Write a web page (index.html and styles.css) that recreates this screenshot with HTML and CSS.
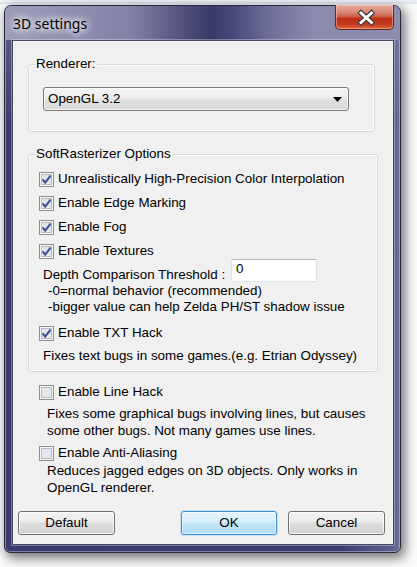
FILE: index.html
```html
<!DOCTYPE html>
<html>
<head>
<meta charset="utf-8">
<link rel="stylesheet" href="styles.css">
</head>
<body>
<div class="desk-strip"></div>
<div class="window">
  <div class="titlebar">
    <span class="title">3D settings</span>
    <div class="close">
      <svg width="59" height="25" viewBox="0 0 59 25">
        <path d="M25 8 L35.5 17.5 M35.5 8 L25 17.5" stroke="#3a3a3a" stroke-width="5.2" stroke-linecap="square" fill="none"/>
        <path d="M25 8 L35.5 17.5 M35.5 8 L25 17.5" stroke="#ffffff" stroke-width="3" stroke-linecap="square" fill="none"/>
      </svg>
    </div>
  </div>
  <div class="client">
    <div class="group g-renderer">
      <span class="group-label">Renderer:</span>
      <div class="combo">
        <span class="combo-text">OpenGL 3.2</span>
        <svg class="combo-arrow" width="9" height="5" viewBox="0 0 9 5"><path d="M0 0 H9 L4.5 5 Z" fill="#000"/></svg>
      </div>
    </div>

    <div class="group g-soft">
      <span class="group-label">SoftRasterizer Options</span>
      <div class="check first">
        <svg class="cb" width="15" height="15" viewBox="0 0 15 15"><rect x="0.5" y="0.5" width="14" height="14" fill="#f7f7f7" stroke="#8e8f8f"/><rect x="2.5" y="2.5" width="10" height="10" fill="#e4e7ec" stroke="#b4b9c3"/><path d="M3.6 7.4 L6.2 10.6 L11.6 3.6" fill="none" stroke="#3d508f" stroke-width="2.1"/></svg>
        <span>Unrealistically High-Precision Color Interpolation</span>
      </div>
      <div class="check">
        <svg class="cb" width="15" height="15" viewBox="0 0 15 15"><rect x="0.5" y="0.5" width="14" height="14" fill="#f7f7f7" stroke="#8e8f8f"/><rect x="2.5" y="2.5" width="10" height="10" fill="#e4e7ec" stroke="#b4b9c3"/><path d="M3.6 7.4 L6.2 10.6 L11.6 3.6" fill="none" stroke="#3d508f" stroke-width="2.1"/></svg>
        <span>Enable Edge Marking</span>
      </div>
      <div class="check">
        <svg class="cb" width="15" height="15" viewBox="0 0 15 15"><rect x="0.5" y="0.5" width="14" height="14" fill="#f7f7f7" stroke="#8e8f8f"/><rect x="2.5" y="2.5" width="10" height="10" fill="#e4e7ec" stroke="#b4b9c3"/><path d="M3.6 7.4 L6.2 10.6 L11.6 3.6" fill="none" stroke="#3d508f" stroke-width="2.1"/></svg>
        <span>Enable Fog</span>
      </div>
      <div class="check">
        <svg class="cb" width="15" height="15" viewBox="0 0 15 15"><rect x="0.5" y="0.5" width="14" height="14" fill="#f7f7f7" stroke="#8e8f8f"/><rect x="2.5" y="2.5" width="10" height="10" fill="#e4e7ec" stroke="#b4b9c3"/><path d="M3.6 7.4 L6.2 10.6 L11.6 3.6" fill="none" stroke="#3d508f" stroke-width="2.1"/></svg>
        <span>Enable Textures</span>
      </div>
      <div class="depth-row">
        <span class="depth-label">Depth Comparison Threshold :</span>
        <div class="textbox">0</div>
      </div>
      <div class="note sub">-0=normal behavior (recommended)</div>
      <div class="note sub">-bigger value can help Zelda PH/ST shadow issue</div>
      <div class="check txt">
        <svg class="cb" width="15" height="15" viewBox="0 0 15 15"><rect x="0.5" y="0.5" width="14" height="14" fill="#f7f7f7" stroke="#8e8f8f"/><rect x="2.5" y="2.5" width="10" height="10" fill="#e4e7ec" stroke="#b4b9c3"/><path d="M3.6 7.4 L6.2 10.6 L11.6 3.6" fill="none" stroke="#3d508f" stroke-width="2.1"/></svg>
        <span>Enable TXT Hack</span>
      </div>
      <div class="note fix">Fixes text bugs in some games.(e.g. Etrian Odyssey)</div>
    </div>

    <div class="check outer line-hack">
      <svg class="cb" width="15" height="15" viewBox="0 0 15 15"><rect x="0.5" y="0.5" width="14" height="14" fill="#f7f7f7" stroke="#8e8f8f"/><rect x="2.5" y="2.5" width="10" height="10" fill="#e4e7ec" stroke="#b4b9c3"/></svg>
      <span>Enable Line Hack</span>
    </div>
    <p class="desc d1">Fixes some graphical bugs involving lines, but causes<br>some other bugs. Not many games use lines.</p>
    <div class="check outer aa">
      <svg class="cb" width="15" height="15" viewBox="0 0 15 15"><rect x="0.5" y="0.5" width="14" height="14" fill="#f7f7f7" stroke="#8e8f8f"/><rect x="2.5" y="2.5" width="10" height="10" fill="#e4e7ec" stroke="#b4b9c3"/></svg>
      <span>Enable Anti-Aliasing</span>
    </div>
    <p class="desc d2">Reduces jagged edges on 3D objects. Only works in<br>OpenGL renderer.</p>

    <div class="buttons">
      <div class="btn">Default</div>
      <div class="btn btn-ok">OK</div>
      <div class="btn btn-cancel">Cancel</div>
    </div>
  </div>
</div>
</body>
</html>
```

FILE: styles.css
```css
html, body {
  margin: 0;
  padding: 0;
}
body {
  width: 417px;
  height: 567px;
  overflow: hidden;
  background: #fbfbfc;
  font-family: "Liberation Sans", Arial, sans-serif;
  font-size: 13.4px;
  color: #000;
}
.desk-strip {
  height: 5px;
  background: linear-gradient(180deg, #eef1f6 0, #eef1f6 2px, #d9deea 3px, #f4f5f8 4px);
}
.window {
  box-sizing: border-box;
  margin-left: 4px;
  width: 397px;
  height: 548px;
  border: 1px solid #2a2a3c;
  border-radius: 7px 7px 6px 6px;
  padding: 0 6px 7px 7px;
  display: flex;
  flex-direction: column;
  background:
    linear-gradient(180deg, rgba(130,130,170,0.55) 0, rgba(130,130,170,0) 120px),
    linear-gradient(90deg, #3b3b70 0, #3d3d72 85%, #5e5e8e 98%, #6c6c98 100%);
  box-shadow: inset 0 0 0 1px rgba(255,255,255,0.35), 3px 4px 12px 1px rgba(0,0,0,0.55);
}
.titlebar {
  flex: none;
  height: 34px;
  margin: 0 -6px 0 -7px;
  padding: 0 6px 0 8px;
  display: flex;
  justify-content: space-between;
  align-items: flex-start;
  border-radius: 6px 6px 0 0;
  background: linear-gradient(90deg, #9d9dbb 0%, #8e8eae 18%, #8282a6 32%, #55557f 44%, #3a3a68 52%, #45457a 57%, #6f6f98 67%, #8a8aac 78%, #8c8cad 100%);
}
.title {
  padding-top: 9px;
  line-height: 18px;
  font-family: "Noto Sans", "Liberation Sans", sans-serif;
  font-size: 14px;
  color: #000;
  text-shadow: 0 0 6px #fff, 0 0 10px rgba(255,255,255,0.9), 0 0 14px rgba(255,255,255,0.7);
}
.close {
  box-sizing: border-box;
  width: 59px;
  height: 25px;
  margin-top: -1px;
  border: 1px solid #5b2a24;
  border-top: none;
  border-radius: 0 0 5px 5px;
  background: linear-gradient(180deg, #e6aa9c 0%, #d98a78 30%, #cc5a44 50%, #bd2e16 55%, #c43a1e 80%, #e0643c 100%);
  box-shadow: inset 0 0 0 1px rgba(255,210,200,0.45);
}
.close svg {
  display: block;
}
.client {
  flex: 1;
  display: flex;
  flex-direction: column;
  background: #f0f0f0;
  border: 1px solid #4a4a62;
  box-shadow: 0 0 0 1px rgba(255,255,255,0.3);
  padding-bottom: 9px;
}
.group {
  border: 1px solid #d5dbe2;
  border-radius: 3px;
  box-shadow: inset 0 0 0 1px #fbfbfb;
}
.group-label {
  display: block;
  width: fit-content;
  margin: -9px 0 0 6px;
  padding: 0 1px;
  line-height: 16px;
  background: #f0f0f0;
}
.g-renderer {
  margin: 23px 18px 0 15px;
  padding-bottom: 20px;
}
.g-soft {
  margin: 22px 15px 0 15px;
  padding-bottom: 7px;
}
.combo {
  box-sizing: border-box;
  margin: 15px 0 0 14px;
  width: 306px;
  height: 24px;
  padding: 0 6px 0 4px;
  display: flex;
  align-items: center;
  justify-content: space-between;
  border: 1px solid #7a7a7a;
  border-radius: 3px;
  background: linear-gradient(180deg, #f4f4f4 0%, #ececec 45%, #e0e0e0 55%, #d8d8d8 100%);
  box-shadow: inset 0 0 0 1px rgba(255,255,255,0.7);
}
.combo-text {
  line-height: 16px;
}
.combo-arrow {
  display: block;
}
.check {
  display: flex;
  align-items: center;
  height: 24px;
  padding-left: 10px;
}
.check .cb {
  display: block;
  flex: none;
  margin-right: 4px;
}
.check span {
  line-height: 16px;
  white-space: nowrap;
}
.check.first {
  margin-top: 5px;
}
.depth-row {
  display: flex;
  align-items: flex-start;
  margin-top: -4px;
  height: 24px;
  padding-left: 14px;
}
.depth-label {
  margin-top: 8px;
  line-height: 16px;
  white-space: nowrap;
}
.textbox {
  box-sizing: border-box;
  margin-left: 6px;
  width: 86px;
  height: 23px;
  padding: 2px 0 0 4px;
  line-height: 14px;
  background: #fff;
  border: 1px solid #dfe4ea;
  border-top-color: #aeb3bb;
  border-radius: 2px;
}
.note {
  line-height: 16px;
  white-space: nowrap;
}
.note.sub {
  padding-left: 19px;
}
.check.txt {
  margin-top: 6px;
}
.note.fix {
  margin-top: 3px;
  padding-left: 14px;
}
.check.outer {
  padding-left: 26px;
}
.line-hack {
  margin-top: 8px;
}
.aa {
  margin-top: 2px;
}
.desc {
  margin: 0;
  padding-left: 34px;
  line-height: 17px;
  white-space: nowrap;
}
.desc.d1 {
  margin-top: 1px;
}
.desc.d2 {
  margin-top: -3px;
}
.buttons {
  margin-top: auto;
  display: flex;
  padding: 0 8px 0 5px;
}
.btn {
  box-sizing: border-box;
  width: 97px;
  height: 24px;
  display: flex;
  align-items: center;
  justify-content: center;
  line-height: 16px;
  border: 1px solid #707070;
  border-radius: 3px;
  background: linear-gradient(180deg, #f3f3f3 0%, #ebebeb 45%, #dddddd 52%, #d2d2d2 100%);
  box-shadow: inset 0 0 0 1px rgba(255,255,255,0.75);
}
.btn-ok {
  width: 96px;
  margin-left: auto;
  border-color: #3c8fd0;
  background: linear-gradient(180deg, #e5f4fc 0%, #d6eefb 45%, #c2e5f8 52%, #b3ddf4 100%);
  box-shadow: inset 0 0 0 1px rgba(255,255,255,0.6), 0 0 0 1px rgba(120,200,245,0.35);
}
.btn-cancel {
  margin-left: 11px;
}
```
